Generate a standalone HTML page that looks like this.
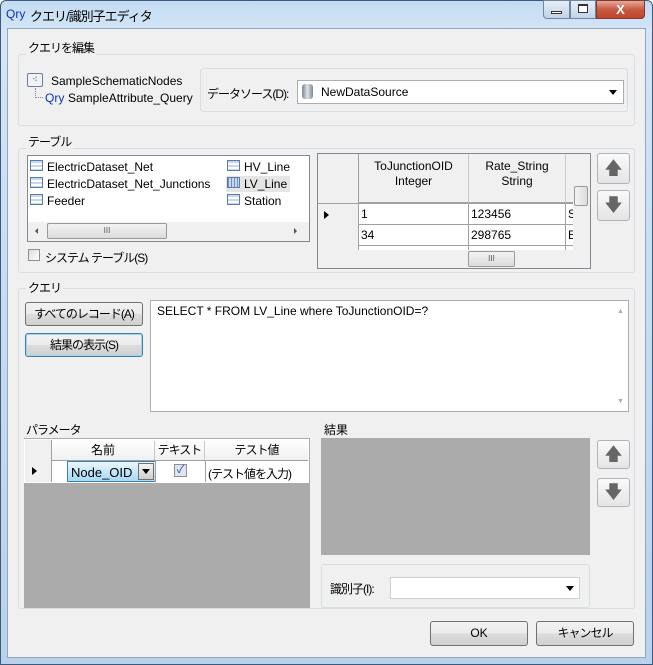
<!DOCTYPE html>
<html><head><meta charset="utf-8"><style>
*{box-sizing:border-box;margin:0;padding:0}
body{width:653px;height:665px;overflow:hidden;background:#fff;font:12px "Liberation Sans","Noto Sans CJK JP",sans-serif;color:#000;position:relative}
.a{position:absolute}
.j{letter-spacing:-1px}
.win{left:0;top:0;width:653px;height:665px;background:linear-gradient(#c4dcf2,#d3e5f6 30px,#b9d1ea);border:1px solid #3a5a80;border-radius:6px 6px 0 0}
.client{left:7px;top:28px;width:639px;height:630px;background:#f0f0f0;border:1px solid #8fa6bf}
.grp{border:1px solid #d5dfe5;border-radius:3px}
.lbl{background:#f0f0f0;padding:0 2px;line-height:14px}
.btn{border:1px solid #707070;border-radius:3px;background:linear-gradient(#f2f2f2,#ebebeb 50%,#dddddd 51%,#cfcfcf);text-align:center;line-height:22px}
.white{background:#fff}
.sb{background:#f0f0f0}
.icon{width:13px;height:11px;border:1px solid #5a7ca8;background:repeating-linear-gradient(#c6d8ee 0 2px,#fff 2px 4px)}
.arrowbtn{border:1px solid #aeb4bb;border-radius:3px;background:linear-gradient(#fafafa,#e4e4e4)}
.cell{border-right:1px solid #a0a0a0;border-bottom:1px solid #a0a0a0;line-height:20px;padding-left:2px;white-space:nowrap;overflow:hidden}
</style></head><body>
<div class="a win"></div>
<div class="a" style="left:6px;top:7px;color:#1030c0;font-size:12px">Qry</div>
<div class="a j" style="left:30px;top:6px;font-size:13px">クエリ/識別子エディタ</div>
<div class="a" style="left:543px;top:0;width:27px;height:19px;border:1px solid #6f86a3;border-radius:0 0 0 4px;background:linear-gradient(#e6eef8,#c3d4e7)"></div>
<div class="a" style="left:551px;top:11px;width:11px;height:3px;border:1px solid #333;background:#fff"></div>
<div class="a" style="left:570px;top:0;width:26px;height:19px;border:1px solid #6f86a3;background:linear-gradient(#e6eef8,#c3d4e7)"></div>
<div class="a" style="left:578px;top:4px;width:10px;height:9px;border:1px solid #333;border-top-width:2px;background:#fff"></div>
<div class="a" style="left:596px;top:0;width:49px;height:19px;border:1px solid #7a3a2e;border-radius:0 0 4px 0;background:linear-gradient(#e9a99a,#c75a43 50%,#c2452c);color:#fff;font-weight:bold;text-align:center;line-height:17px;font-size:13px">X</div>
<div class="a client"></div>

<!-- group 1 -->
<div class="a grp" style="left:18px;top:54px;width:617px;height:72px"></div>
<div class="a lbl j" style="left:26px;top:41px">クエリを編集</div>
<div class="a" style="left:27px;top:73px;width:16px;height:14px;border:1px solid #6a7f99;border-radius:2px;background:#eef2f7;font-size:9px;line-height:11px;text-align:center">⁖</div>
<div class="a" style="left:51px;top:74px">SampleSchematicNodes</div>
<div class="a" style="left:35px;top:88px;width:8px;height:10px;border-left:1px dotted #888;border-bottom:1px dotted #888"></div>
<div class="a" style="left:45px;top:91px;color:#1030c0">Qry</div>
<div class="a" style="left:68px;top:91px">SampleAttribute_Query</div>
<div class="a grp" style="left:200px;top:68px;width:428px;height:44px"></div>
<div class="a j" style="left:207px;top:85px">データソース(D):</div>
<div class="a white" style="left:297px;top:80px;width:327px;height:24px;border:1px solid #abadb3"></div>
<div class="a" style="left:302px;top:84px;width:11px;height:15px;border-radius:3px;background:linear-gradient(90deg,#7a8796,#dfe4ea,#7a8796)"></div>
<div class="a" style="left:321px;top:85px">NewDataSource</div>
<div class="a" style="left:609px;top:90px;border:4px solid transparent;border-top:5px solid #000"></div>

<!-- group 2 -->
<div class="a grp" style="left:18px;top:148px;width:617px;height:125px"></div>
<div class="a lbl j" style="left:26px;top:135px">テーブル</div>
<div class="a white" style="left:27px;top:155px;width:283px;height:87px;border:1px solid #828790"></div>
<div class="a icon" style="left:30px;top:160px"></div><div class="a" style="left:47px;top:160px">ElectricDataset_Net</div>
<div class="a icon" style="left:30px;top:177px"></div><div class="a" style="left:47px;top:177px">ElectricDataset_Net_Junctions</div>
<div class="a icon" style="left:30px;top:194px"></div><div class="a" style="left:47px;top:194px">Feeder</div>
<div class="a icon" style="left:227px;top:160px"></div><div class="a" style="left:244px;top:160px">HV_Line</div>
<div class="a" style="left:226px;top:176px;width:64px;height:16px;background:#e5e5e5"></div>
<div class="a icon" style="left:227px;top:177px;background:repeating-linear-gradient(90deg,#6f8fbf 0 1px,#c6d8ee 1px 3px)"></div><div class="a" style="left:244px;top:177px">LV_Line</div>
<div class="a icon" style="left:227px;top:194px"></div><div class="a" style="left:244px;top:194px">Station</div>
<div class="a sb" style="left:28px;top:222px;width:281px;height:19px"></div>
<div class="a" style="left:47px;top:223px;width:120px;height:16px;border:1px solid #9a9a9a;border-radius:2px;background:linear-gradient(#f3f3f3,#dcdcdc);text-align:center;font-size:8px;line-height:14px;color:#555">III</div>
<div class="a" style="left:32px;top:228px;border:3px solid transparent;border-right:3px solid #555"></div>
<div class="a" style="left:294px;top:228px;border:3px solid transparent;border-left:3px solid #555"></div>
<div class="a white" style="left:28px;top:249px;width:12px;height:12px;border:1px solid #8f8f8f;background:linear-gradient(135deg,#dcdcdc,#fff)"></div>
<div class="a j" style="left:45px;top:249px">システム テーブル(S)</div>

<!-- grid -->
<div class="a" style="left:317px;top:153px;width:274px;height:116px;border:1px solid #828790;background:#f0f0f0;overflow:hidden">
 <div class="a" style="left:0;top:0;width:41px;height:50px;background:#f0f0f0;border-right:1px solid #a0a0a0;border-bottom:1px solid #a0a0a0"></div>
 <div class="a" style="left:41px;top:0;width:110px;height:50px;border-right:1px solid #c8c8c8;border-bottom:2px solid #a0a0a0;text-align:center;padding-top:5px;line-height:15px">ToJunctionOID<br>Integer</div>
 <div class="a" style="left:151px;top:0;width:97px;height:50px;border-right:1px solid #c8c8c8;border-bottom:2px solid #a0a0a0;text-align:center;padding-top:5px;line-height:15px">Rate_String<br>String</div>
 <div class="a" style="left:248px;top:0;width:10px;height:50px;border-bottom:2px solid #a0a0a0"></div>
 <div class="a" style="left:0;top:50px;width:41px;height:65px;border-right:1px solid #a0a0a0"></div>
 <div class="a" style="left:6px;top:57px;border:4px solid transparent;border-left:5px solid #000"></div>
 <div class="a white cell" style="left:41px;top:50px;width:110px;height:21px">1</div>
 <div class="a white cell" style="left:151px;top:50px;width:97px;height:21px">123456</div>
 <div class="a white cell" style="left:248px;top:50px;width:10px;height:21px">S</div>
 <div class="a white cell" style="left:41px;top:71px;width:110px;height:21px">34</div>
 <div class="a white cell" style="left:151px;top:71px;width:97px;height:21px">298765</div>
 <div class="a white cell" style="left:248px;top:71px;width:10px;height:21px">E</div>
 <div class="a white cell" style="left:41px;top:92px;width:110px;height:21px">35</div>
 <div class="a white cell" style="left:151px;top:92px;width:97px;height:21px">314536</div>
 <div class="a white cell" style="left:248px;top:92px;width:10px;height:21px">N</div>
 <div class="a sb" style="left:255px;top:0;width:17px;height:96px"></div>
 <div class="a" style="left:256px;top:32px;width:14px;height:20px;border:1px solid #9a9a9a;border-radius:2px;background:linear-gradient(90deg,#f3f3f3,#dcdcdc)"></div>
 <div class="a sb" style="left:0;top:96px;width:272px;height:18px"></div>
 <div class="a" style="left:150px;top:97px;width:47px;height:16px;border:1px solid #9a9a9a;border-radius:2px;background:linear-gradient(#f3f3f3,#dcdcdc);text-align:center;font-size:8px;line-height:14px;color:#555">III</div>
</div>
<div class="a arrowbtn" style="left:597px;top:153px;width:33px;height:31px;color:#666;text-align:center;font-size:18px;line-height:29px">🡅</div>
<div class="a arrowbtn" style="left:597px;top:190px;width:33px;height:31px;color:#666;text-align:center;font-size:18px;line-height:29px">🡇</div>

<!-- group 3 -->
<div class="a grp" style="left:18px;top:288px;width:617px;height:321px"></div>
<div class="a lbl j" style="left:26px;top:281px">クエリ</div>
<div class="a btn j" style="left:25px;top:302px;width:118px;height:24px">すべてのレコード(A)</div>
<div class="a btn j" style="left:25px;top:333px;width:118px;height:24px;border-color:#3c7fb1;box-shadow:inset 0 0 0 1px #9fd5f4">結果の表示(S)</div>
<div class="a white" style="left:150px;top:300px;width:479px;height:112px;border:1px solid #abadb3"></div>
<div class="a" style="left:157px;top:304px">SELECT * FROM LV_Line where ToJunctionOID=?</div>
<div class="a" style="left:617px;top:308px;font-size:7px;color:#aaa">▲</div>
<div class="a" style="left:617px;top:398px;font-size:7px;color:#aaa">▼</div>

<div class="a j" style="left:26px;top:421px">パラメータ</div>
<div class="a" style="left:24px;top:438px;width:286px;height:170px;background:#ababab"></div>
<div class="a" style="left:24px;top:439px;width:285px;height:44px;background:#fff"></div>
<div class="a" style="left:25px;top:440px;width:27px;height:42px;background:#f0f0f0;border-right:1px solid #a0a0a0"></div>
<div class="a" style="left:52px;top:440px;width:256px;height:21px;background:linear-gradient(#fff,#f0f0f0);border-bottom:1px solid #a0a0a0"></div>
<div class="a" style="left:52px;top:441px;width:103px;text-align:center;border-right:1px solid #c8c8c8;line-height:19px">名前</div>
<div class="a j" style="left:155px;top:441px;width:50px;text-align:center;border-right:1px solid #c8c8c8;line-height:19px">テキスト</div>
<div class="a j" style="left:205px;top:441px;width:103px;text-align:center;line-height:19px">テスト値</div>
<div class="a" style="left:32px;top:467px;border:4px solid transparent;border-left:5px solid #000"></div>
<div class="a" style="left:67px;top:461px;width:89px;height:21px;border:1px solid #3c7fb1;background:linear-gradient(#eaf6fd,#a7d9f5)"></div>
<div class="a" style="left:71px;top:465px;font-size:13px">Node_OID</div>
<div class="a" style="left:138px;top:463px;width:16px;height:17px;border:1px solid #707070;background:linear-gradient(#f2f2f2,#cfcfcf)"></div>
<div class="a" style="left:142px;top:469px;border:4px solid transparent;border-top:5px solid #000"></div>
<div class="a" style="left:155px;top:461px;width:1px;height:21px;background:#a0a0a0"></div>
<div class="a" style="left:205px;top:461px;width:1px;height:21px;background:#a0a0a0"></div>
<div class="a" style="left:174px;top:464px;width:13px;height:13px;border:1px solid #8f8f8f;background:#dde4ee;color:#2a4f9c;font-size:11px;line-height:11px;text-align:center">✓</div>
<div class="a j" style="left:208px;top:465px">(テスト値を入力)</div>

<div class="a" style="left:324px;top:421px">結果</div>
<div class="a" style="left:321px;top:438px;width:269px;height:117px;background:#ababab"></div>
<div class="a arrowbtn" style="left:597px;top:440px;width:33px;height:29px;color:#666;text-align:center;font-size:18px;line-height:27px">🡅</div>
<div class="a arrowbtn" style="left:597px;top:478px;width:33px;height:29px;color:#666;text-align:center;font-size:18px;line-height:27px">🡇</div>
<div class="a grp" style="left:321px;top:564px;width:269px;height:44px"></div>
<div class="a j" style="left:330px;top:580px">識別子(I):</div>
<div class="a white" style="left:390px;top:577px;width:190px;height:22px;border:1px solid #d0d0d0"></div>
<div class="a" style="left:566px;top:586px;border:4px solid transparent;border-top:5px solid #000"></div>

<div class="a btn" style="left:430px;top:621px;width:98px;height:25px">OK</div>
<div class="a btn j" style="left:536px;top:621px;width:98px;height:25px">キャンセル</div>
</body></html>
